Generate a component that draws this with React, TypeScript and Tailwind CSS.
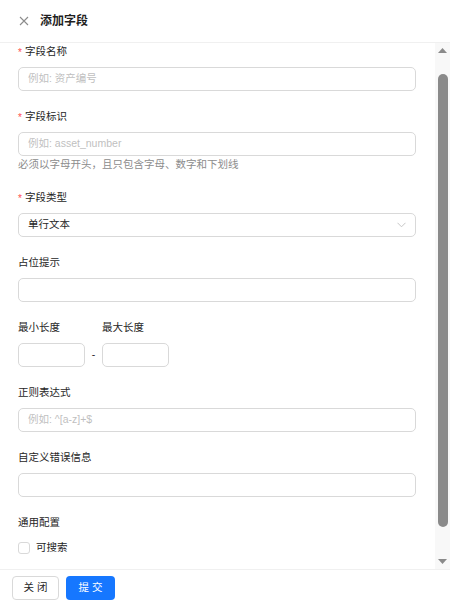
import { useEffect, useRef } from "react";

const Label = ({ text, required }: { text: string; required?: boolean }) => (
  <div className="h-[20px] mb-[5px] flex items-center text-[10.5px] text-[#262626]">
    {required && <span className="text-[#ff4d4f] mr-[3px] text-[10px]">*</span>}
    {text}
  </div>
);

const Input = ({ placeholder, className = "w-full" }: { placeholder?: string; className?: string }) => (
  <div
    className={`h-[24px] border border-[#d9d9d9] rounded-[5px] bg-white flex items-center px-[9px] text-[10.5px] text-[#bfbfbf] ${className}`}
  >
    {placeholder}
  </div>
);

const App = () => {
  const scrollRef = useRef<HTMLDivElement>(null);

  useEffect(() => {
    if (scrollRef.current) scrollRef.current.scrollTop = 21;
  }, []);

  return (
    <div
      className="h-[606px] w-[450px] flex flex-col bg-white overflow-hidden"
      style={{ fontFamily: '"Liberation Sans", "Noto Sans CJK SC", sans-serif' }}
    >
      {/* Header */}
      <div className="h-[43px] shrink-0 border-b border-[#f0f0f0] flex items-center pl-[19px] gap-[11px]">
        <svg width="10" height="10" viewBox="0 0 10 10" className="text-[#8c8c8c]">
          <path d="M1 1L9 9M9 1L1 9" stroke="currentColor" strokeWidth="1.1" />
        </svg>
        <span className="text-[12px] font-semibold text-[#1f1f1f]">添加字段</span>
      </div>

      {/* Body */}
      <div className="flex-1 flex min-h-0">
        <div ref={scrollRef} className="flex-1 overflow-hidden">
          <div className="pt-5 pb-10 pl-[18px] pr-[19px]">
            <div className="mb-4">
              <Label text="字段名称" required />
              <Input placeholder="例如: 资产编号" />
            </div>

            <div className="mb-[15px]">
              <Label text="字段标识" required />
              <Input placeholder="例如: asset_number" />
              <div className="h-[17px] flex items-center text-[10.5px] text-[#8c8c8c]">
                必须以字母开头，且只包含字母、数字和下划线
              </div>
            </div>

            <div className="mb-4">
              <Label text="字段类型" required />
              <div className="h-[24px] border border-[#d9d9d9] rounded-[5px] flex items-center justify-between px-[9px] text-[10.5px] text-[#262626]">
                <span>单行文本</span>
                <svg width="9" height="6" viewBox="0 0 9 6" className="text-[#bfbfbf]">
                  <path d="M0.5 0.8L4.5 4.8L8.5 0.8" fill="none" stroke="currentColor" strokeWidth="0.9" />
                </svg>
              </div>
            </div>

            <div className="mb-4">
              <Label text="占位提示" />
              <Input />
            </div>

            <div className="mb-4 flex">
              <div>
                <Label text="最小长度" />
                <Input className="w-[67px]" />
              </div>
              <div className="w-[17px] pt-[25px] h-[49px] flex items-center justify-center text-[10.5px] text-[#262626]">
                -
              </div>
              <div>
                <Label text="最大长度" />
                <Input className="w-[67px]" />
              </div>
            </div>

            <div className="mb-4">
              <Label text="正则表达式" />
              <Input placeholder="例如: ^[a-z]+$" />
            </div>

            <div className="mb-4">
              <Label text="自定义错误信息" />
              <Input />
            </div>

            <div>
              <Label text="通用配置" />
              <div className="h-[20px] flex items-center gap-[6px] text-[10.5px] text-[#262626]">
                <span className="w-[12px] h-[12px] border border-[#d9d9d9] rounded-[3px] bg-white" />
                可搜索
              </div>
            </div>
          </div>
        </div>

        {/* Scrollbar */}
        <div className="w-[15px] shrink-0 bg-[#f8f8f8] flex flex-col items-center">
          <div className="h-[15px] w-full flex items-center justify-center">
            <svg width="9" height="5" viewBox="0 0 9 5">
              <path d="M0 5L4.5 0L9 5Z" fill="#8a8a8a" />
            </svg>
          </div>
          <div className="flex-1 w-full flex flex-col items-center pt-[16px] pb-[27px]">
            <div className="w-[10px] flex-1 rounded-[5px] bg-[#8a8a8a]" />
          </div>
          <div className="h-[15px] w-full flex items-center justify-center">
            <svg width="9" height="5" viewBox="0 0 9 5">
              <path d="M0 0L4.5 5L9 0Z" fill="#8a8a8a" />
            </svg>
          </div>
        </div>
      </div>

      {/* Footer */}
      <div className="h-[37px] shrink-0 border-t border-[#f0f0f0] flex items-center gap-[7px] pl-[12px]">
        <button className="h-[24px] w-[47px] border border-[#d9d9d9] rounded-[4px] bg-white text-[10.5px] text-[#262626]">
          关 闭
        </button>
        <button className="h-[24px] w-[49px] rounded-[4px] bg-[#1677ff] text-[10.5px] text-white">
          提 交
        </button>
      </div>
    </div>
  );
};

export default App;
